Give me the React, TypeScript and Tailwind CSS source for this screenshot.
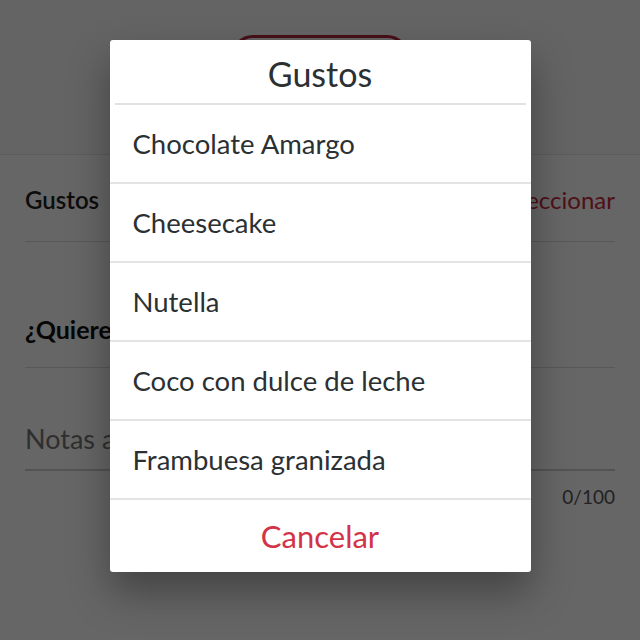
import React from "react";

const flavors = [
  "Chocolate Amargo",
  "Cheesecake",
  "Nutella",
  "Coco con dulce de leche",
  "Frambuesa granizada",
];

export default function App() {
  return (
    <div
      className="relative w-[640px] h-[640px] overflow-hidden bg-white"
      style={{ fontFamily: "Lato, 'Open Sans', sans-serif" }}
    >
      {/* page behind the dialog */}
      <div className="h-[155px] bg-[#fbfbfb] border-b border-[#e6e6e6] flex justify-center pt-[35px]">
        <div className="w-[178px] h-[48px] rounded-[22px] border-[3px] border-[#b3263a]" />
      </div>
      <div className="px-[25px]">
        <div className="h-[87px] flex items-center justify-between border-b border-[#dcdcdc] pt-[4px]">
          <span className="text-[24px] font-semibold text-[#222]">Gustos</span>
          <span className="text-[24px] text-[#c8283c]">Seleccionar</span>
        </div>
        <div className="h-[126px] flex items-center border-b border-[#dcdcdc] pt-[50px]">
          <span className="text-[25px] font-bold text-[#111]">¿Quieres agregar algo más?</span>
        </div>
        <div className="h-[103px] flex items-end border-b-2 border-[#d0d0d0] pb-[10px]">
          <span className="text-[27px] text-[#777]">Notas adicionales</span>
        </div>
        <div className="flex justify-end pt-[12px]">
          <span className="text-[19px] text-[#555]">0/100</span>
        </div>
      </div>

      {/* dialog overlay */}
      <div className="absolute inset-0 bg-black/60 flex justify-center items-start pt-[40px]">
        <div className="w-[421px] bg-white rounded-[3px] shadow-[0_20px_40px_rgba(0,0,0,0.35)] flex flex-col">
          <div className="h-[65px] mx-[5px] border-b-2 border-[#e2e2e2] flex items-center justify-center pt-[4px]">
            <span className="text-[34px] leading-none text-[#2b3033]">Gustos</span>
          </div>
          {flavors.map((f) => (
            <div
              key={f}
              className="h-[79px] border-b-2 border-[#e4e4e4] flex items-center pl-[23px]"
            >
              <span className="text-[27.5px] text-[#2b3033]">{f}</span>
            </div>
          ))}
          <div className="h-[72px] flex items-center justify-center">
            <span className="text-[31px] text-[#d33346]">Cancelar</span>
          </div>
        </div>
      </div>
    </div>
  );
}
